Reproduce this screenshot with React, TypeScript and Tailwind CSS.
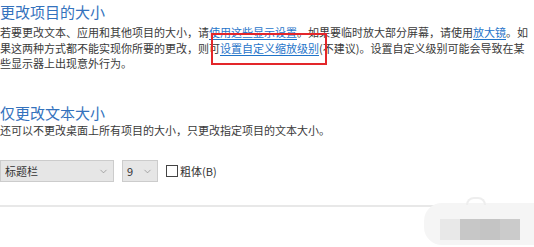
import { ChevronDown } from 'lucide-react'

const FONT = { fontFamily: '"Noto Sans CJK SC", "Microsoft YaHei", sans-serif' }

function Link({ children }: { children: React.ReactNode }) {
  return <span className="text-[#1f74c9] underline underline-offset-2">{children}</span>
}

function Select({ value, width }: { value: string; width: string }) {
  return (
    <div
      className={`${width} flex h-[22px] items-center justify-between border border-[#cccccc] bg-[#e6e6e6] pl-[4px] pr-[4px] text-[11px] text-[#333]`}
    >
      <span>{value}</span>
      <ChevronDown className="h-[11px] w-[11px] text-[#888]" strokeWidth={1.5} />
    </div>
  )
}

export default function App() {
  return (
    <div
      className="relative h-[247px] w-[534px] overflow-hidden bg-white text-[#3a3a3a]"
      style={FONT}
    >
      <div className="flex flex-col">
        {/* section 1 */}
        <h2 className="mt-[2px] text-[15px] leading-[20px] font-normal text-[#3472bd]">
          更改项目的大小
        </h2>
        <div className="mt-[3px] text-[11px] leading-[15.5px] whitespace-nowrap">
          <div>
            若要更改文本、应用和其他项目的大小，请<Link>使用这些显示设置</Link>。如果要临时放大部分屏幕，请使用<Link>放大镜</Link>。如
          </div>
          <div>
            果这两种方式都不能实现你所要的更改，则可<Link>设置自定义缩放级别</Link>(不建议)。设置自定义级别可能会导致在某
          </div>
          <div>些显示器上出现意外行为。</div>
        </div>

        {/* section 2 */}
        <h2 className="mt-[31px] text-[15px] leading-[20px] font-normal text-[#3472bd]">
          仅更改文本大小
        </h2>
        <p className="text-[11px] leading-[15.5px] whitespace-nowrap">
          还可以不更改桌面上所有项目的大小，只更改指定项目的文本大小。
        </p>

        <div className="mt-[22px] flex items-center gap-[8px]">
          <Select value="标题栏" width="w-[114px]" />
          <Select value="9" width="w-[36px]" />
          <div className="flex items-center gap-[2px] text-[11px] text-[#333]">
            <span className="h-[12px] w-[12px] border border-[#444] bg-white" />
            <span>粗体(B)</span>
          </div>
        </div>

        <div className="mt-[23px] h-[2px] w-full bg-[#e8e8e8]" />
      </div>

      {/* red annotation box */}
      <div className="absolute left-[211px] top-[33px] h-[32px] w-[116px] border-2 border-[#e3262a]" />

      {/* blurred watermark */}
      <div className="absolute left-[424px] top-[203px] h-[42px] w-[110px] rounded-l-[18px] bg-[#f5f5f5]" />
      <div className="absolute left-[466px] top-[197px] h-[8px] w-[20px] rounded-t-full border-2 border-b-0 border-[#eeeeee]" />
      <div className="absolute left-[440px] top-[219px] flex h-[21px]">
        <div className="w-[20px] bg-[#e8e8e8]" />
        <div className="w-[20px] bg-[#c7c7c7]" />
        <div className="w-[20px] bg-[#c4c4c4]" />
        <div className="w-[20px] bg-[#cbcbcb]" />
      </div>
    </div>
  )
}
